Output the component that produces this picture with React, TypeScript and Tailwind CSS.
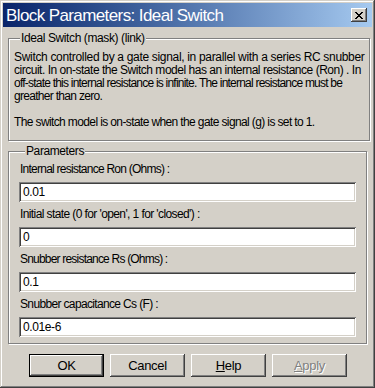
import React from 'react'

const font = "font-['Liberation_Sans',Arial,sans-serif]"
const raised =
  'shadow-[inset_-1px_-1px_#404040,inset_1px_1px_#ffffff,inset_-2px_-2px_#808080,inset_2px_2px_#d4d0c8]'
const sunken =
  'shadow-[inset_1px_1px_#808080,inset_-1px_-1px_#ffffff,inset_2px_2px_#404040,inset_-2px_-2px_#d4d0c8]'
const groupBox =
  'border border-[#808080] shadow-[inset_1px_1px_#ffffff,1px_1px_#ffffff] rounded-none'

const params = [
  { label: 'Internal resistance Ron (Ohms) :', value: '0.01', track: 'tracking-[-0.75px]' },
  { label: "Initial state (0 for 'open', 1 for 'closed') :", value: '0', track: 'tracking-[-0.6px]' },
  { label: 'Snubber resistance Rs (Ohms) :', value: '0.1', track: 'tracking-[-0.8px]' },
  { label: 'Snubber capacitance Cs (F) :', value: '0.01e-6', track: 'tracking-[-0.65px]' },
]

function Field({ label, value, track }: { label: string; value: string; track: string }) {
  return (
    <div className="flex flex-col">
      <label className={`leading-[13px] pl-[1px] whitespace-nowrap ${track}`}>{label}</label>
      <div className={`mt-[6px] h-[20px] bg-white flex items-center px-[4px] ${sunken}`}>{value}</div>
    </div>
  )
}

function Btn({ children, primary, disabled }: { children: React.ReactNode; primary?: boolean; disabled?: boolean }) {
  const cls = [
    'w-[75px] h-[23px] bg-[#d4d0c8] flex items-center justify-center text-[13px] tracking-[-0.3px]',
    primary ? 'border border-black' : '',
    raised,
    disabled ? 'text-[#808080] [text-shadow:1px_1px_#ffffff]' : 'text-black',
  ]
  return <button className={cls.filter(Boolean).join(' ')}>{children}</button>
}

export default function App() {
  return (
    <div
      className={`w-[375px] h-[388px] bg-[#d4d0c8] p-[3px] flex flex-col text-[12px] tracking-[-0.4px] text-black ${font} shadow-[inset_-1px_-1px_#404040,inset_1px_1px_#d4d0c8,inset_-2px_-2px_#808080,inset_2px_2px_#ffffff]`}
    >
      {/* title bar */}
      <div className="h-[24px] flex items-center justify-between pl-[3px] pr-[5px] bg-linear-to-r from-[#0a246a] to-[#a6caf0]">
        <span className="text-[17px] tracking-[-0.6px] text-white leading-none">Block Parameters: Ideal Switch</span>
        <button className={`w-[16px] h-[14px] bg-[#d4d0c8] flex items-center justify-center ${raised}`}>
          <svg width="8" height="7" viewBox="0 0 8 7">
            <path
              d="M0 0h2v1h1v1h2V1h1V0h2v1H7v1H6v1H5v1h1v1h1v1h1v1H6V6H5V5H3v1H2v1H0V6h1V5h1V4h1V3H2V2H1V1H0z"
              fill="#000"
            />
          </svg>
        </button>
      </div>

      <div className="flex flex-col px-[5px]">
        <fieldset className={`mt-[5px] px-[5px] pb-[11px] ${groupBox}`}>
          <legend className="leading-[13px] px-[1px] ml-[6px] bg-[#d4d0c8]">Ideal Switch (mask) (link)</legend>
          <div className="pt-[6px] leading-[13px] whitespace-nowrap">
            <p className="tracking-[-0.32px]">Switch controlled by a gate signal, in parallel with a series RC snubber</p>
            <p className="tracking-[-0.48px]">
              circuit. In on-state the Switch model has an internal resistance (Ron) . In
            </p>
            <p className="tracking-[-0.78px]">
              off-state this internal resistance is infinite. The internal resistance must be
            </p>
            <p className="tracking-[-0.7px]">greather than zero.</p>
            <p className="mt-[13px] tracking-[-0.62px]">The switch model is on-state when the gate signal (g) is set to 1.</p>
          </div>
        </fieldset>

        <fieldset className={`mt-[4px] px-[10px] pb-[6px] ${groupBox}`}>
          <legend className="leading-[13px] px-[1px] ml-[6px] bg-[#d4d0c8]">Parameters</legend>
          <div className="pt-[5px] flex flex-col gap-[6px]">
            {params.map((p) => (
              <Field key={p.label} label={p.label} value={p.value} track={p.track} />
            ))}
          </div>
        </fieldset>

        <div className="mt-[10px] flex gap-[6px] pl-[21px]">
          <Btn primary>OK</Btn>
          <Btn>Cancel</Btn>
          <Btn>
            <span className="underline">H</span>elp
          </Btn>
          <Btn disabled>
            <span className="underline">A</span>pply
          </Btn>
        </div>
      </div>
    </div>
  )
}
